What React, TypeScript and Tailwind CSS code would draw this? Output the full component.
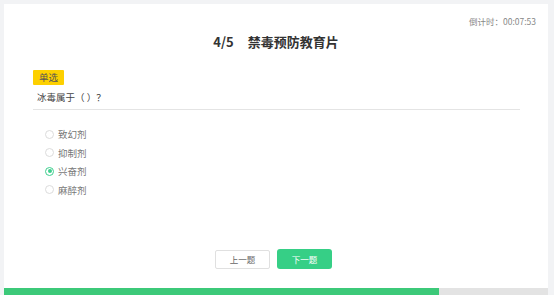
import React from "react";

const options = ["致幻剂", "抑制剂", "兴奋剂", "麻醉剂"];

export default function App() {
  const selected = 2;
  return (
    <div
      className="w-[554px] h-[295px] bg-[#f2f3f5] pt-[4px] pl-[4px] pr-[6px] overflow-hidden"
      style={{ fontFamily: '"Noto Sans CJK SC", "Noto Sans", sans-serif' }}
    >
      <div className="bg-white h-full flex flex-col">
        <div className="flex justify-end pr-[12px] pt-[11px] text-[8.5px] leading-[12px] text-[#888]">
          倒计时：00:07:53
        </div>
        <div className="flex justify-center gap-[14px] mt-[6px] text-[13px] leading-[18px] font-bold text-[#333]">
          <span>4/5</span>
          <span>禁毒预防教育片</span>
        </div>
        <div className="px-[29px] mt-[11px]">
          <div className="inline-block bg-[#fdd000] text-[#555] text-[9.5px] leading-[15px] px-[6px] rounded-[1px]">
            单选
          </div>
          <div className="text-[9.5px] leading-[14px] text-[#444] mt-[4px] pl-[4px] pb-[5px] border-b border-[#e4e4e4] w-[487px]">
            冰毒属于（ ）？
          </div>
          <div className="flex flex-col gap-[4.5px] mt-[17px] pl-[12px]">
            {options.map((o, i) => (
              <div key={o} className="flex items-center gap-[4px] h-[14px]">
                <span
                  className={
                    "w-[9px] h-[9px] rounded-full border flex items-center justify-center " +
                    (i === selected ? "border-[#3ecf8e]" : "border-[#dcdcdc]")
                  }
                >
                  {i === selected && <span className="w-[4px] h-[4px] rounded-full bg-[#3ecf8e]" />}
                </span>
                <span className="text-[9.5px] leading-[14px] text-[#777]">{o}</span>
              </div>
            ))}
          </div>
        </div>
        <div className="flex justify-center gap-[7px] mt-auto mb-[19px] pr-[5px]">
          <button className="w-[55px] h-[19px] border border-[#e0e0e0] bg-white text-[8.5px] text-[#666] rounded-[2px]">
            上一题
          </button>
          <button className="w-[55px] h-[20px] bg-[#36cf86] text-white text-[8.5px] rounded-[3px] -mt-[1px]">
            下一题
          </button>
        </div>
        <div className="h-[7px] bg-[#e3e3e3] flex">
          <div className="h-full bg-[#3cc979]" style={{ width: `${(4 / 5) * 100}%` }} />
        </div>
      </div>
    </div>
  );
}
